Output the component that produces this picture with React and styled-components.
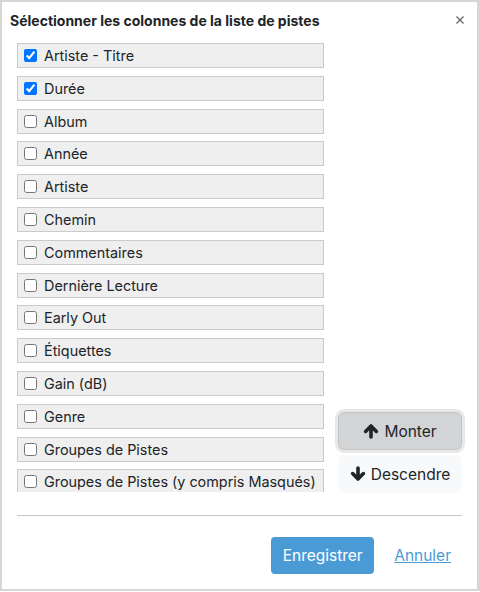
import { createGlobalStyle } from "styled-components";
import styled from "styled-components";

const GlobalStyle = createGlobalStyle`
  html, body {
    margin: 0;
    padding: 0;
    background: #ffffff;
    font-family: Inter, "Noto Sans", "Liberation Sans", sans-serif;
    color: #212529;
  }
  * {
    box-sizing: border-box;
  }
`;

const columns = [
  { id: 1, text: "Artiste - Titre", checked: true },
  { id: 2, text: "Durée", checked: true },
  { id: 3, text: "Album" },
  { id: 4, text: "Année" },
  { id: 5, text: "Artiste" },
  { id: 6, text: "Chemin" },
  { id: 7, text: "Commentaires" },
  { id: 8, text: "Dernière Lecture" },
  { id: 9, text: "Early Out" },
  { id: 10, text: "Étiquettes" },
  { id: 11, text: "Gain (dB)" },
  { id: 12, text: "Genre" },
  { id: 13, text: "Groupes de Pistes" },
  { id: 14, text: "Groupes de Pistes (y compris Masqués)" },
];

const Arrow = ({ down }) => (
  <svg className="arrow" viewBox="0 0 16 16" style={down ? { transform: "rotate(180deg)" } : undefined}>
    <path
      d="M8 14V3.2 M2.6 8.4 L8 3 L13.4 8.4"
      fill="none"
      stroke="currentColor"
      strokeWidth="3.6"
      strokeLinecap="round"
      strokeLinejoin="round"
    />
  </svg>
);

const App = () => {
  return (
    <>
      <GlobalStyle />
      <Dialog>
        <Header>
          <Title>Sélectionner les colonnes de la liste de pistes</Title>
          <Close aria-label="Fermer">
            <svg viewBox="0 0 8 8">
              <path d="M0.5 0.5 L7.5 7.5 M7.5 0.5 L0.5 7.5" stroke="currentColor" strokeWidth="1.4" />
            </svg>
          </Close>
        </Header>
        <Body>
          <List>
            {columns.map((item) => (
              <Row key={item.id}>
                <input type="checkbox" defaultChecked={!!item.checked} />
                <span>{item.text}</span>
              </Row>
            ))}
          </List>
          <Side>
            <MoveButton $active>
              <Arrow />
              Monter
            </MoveButton>
            <MoveButton>
              <Arrow down />
              Descendre
            </MoveButton>
          </Side>
        </Body>
        <Divider />
        <Footer>
          <SaveButton>Enregistrer</SaveButton>
          <CancelLink href="#">Annuler</CancelLink>
        </Footer>
      </Dialog>
    </>
  );
};

export default App;

const Dialog = styled.div`
  width: 480px;
  height: 591px;
  border: 2px solid #d6d6d6;
  border-right-width: 3px;
  background: #fff;
  display: flex;
  flex-direction: column;
`;

const Header = styled.div`
  height: 41px;
  padding: 0 13px 0 8px;
  display: flex;
  align-items: center;
  justify-content: space-between;
`;

const Title = styled.h2`
  margin: 0;
  font-size: 14px;
  font-weight: 700;
  color: #212529;
  position: relative;
  top: -2px;
`;

const Close = styled.span`
  width: 8px;
  height: 8px;
  color: #6b6b6b;
  display: flex;
  position: relative;
  top: -3px;

  svg {
    width: 8px;
    height: 8px;
  }
`;

const Body = styled.div`
  display: flex;
  align-items: flex-end;
  padding: 0 0 0 15px;
`;

const List = styled.div`
  width: 307px;
  height: 449px;
  overflow: hidden;
`;

const Row = styled.label`
  height: 25px;
  margin-bottom: 7.8px;
  border: 1px solid #cacaca;
  background: #efefef;
  display: flex;
  align-items: center;
  gap: 7px;
  padding-left: 6px;
  font-size: 14.4px;
  color: #212529;
  white-space: nowrap;

  & input {
    width: 13px;
    height: 13px;
    margin: 0;
  }
`;

const Side = styled.div`
  margin-left: 14px;
  display: flex;
  flex-direction: column;
  gap: 5px;
  margin-bottom: -1px;
`;

const MoveButton = styled.button`
  width: 124px;
  height: 38px;
  border-radius: 6px;
  border: 1px solid ${(p) => (p.$active ? "#c4c5c7" : "#f8f9fa")};
  background: ${(p) => (p.$active ? "#d3d4d5" : "#f8f9fa")};
  box-shadow: ${(p) => (p.$active ? "0 0 0 3px #e8e8e9" : "none")};
  color: #212529;
  font-family: Inter, "Noto Sans", "Liberation Sans", sans-serif;
  font-size: 15.5px;
  display: flex;
  align-items: center;
  justify-content: center;
  gap: 5px;
  padding: 0;

  .arrow {
    width: 16px;
    height: 16px;
    color: #212529;
  }
`;

const Divider = styled.hr`
  margin: 23px 15px 0 15px;
  border: none;
  border-top: 1px solid #c8c8c8;
`;

const Footer = styled.div`
  display: flex;
  justify-content: flex-end;
  align-items: center;
  gap: 20px;
  padding: 21px 26px 0 0;
`;

const SaveButton = styled.button`
  width: 103px;
  height: 37px;
  border: none;
  border-radius: 4px;
  background: #4a9bd5;
  color: #fff;
  font-family: Inter, "Noto Sans", "Liberation Sans", sans-serif;
  font-size: 15.5px;
`;

const CancelLink = styled.a`
  color: #4a9bd5;
  font-size: 15.5px;
  text-decoration: underline;
`;
